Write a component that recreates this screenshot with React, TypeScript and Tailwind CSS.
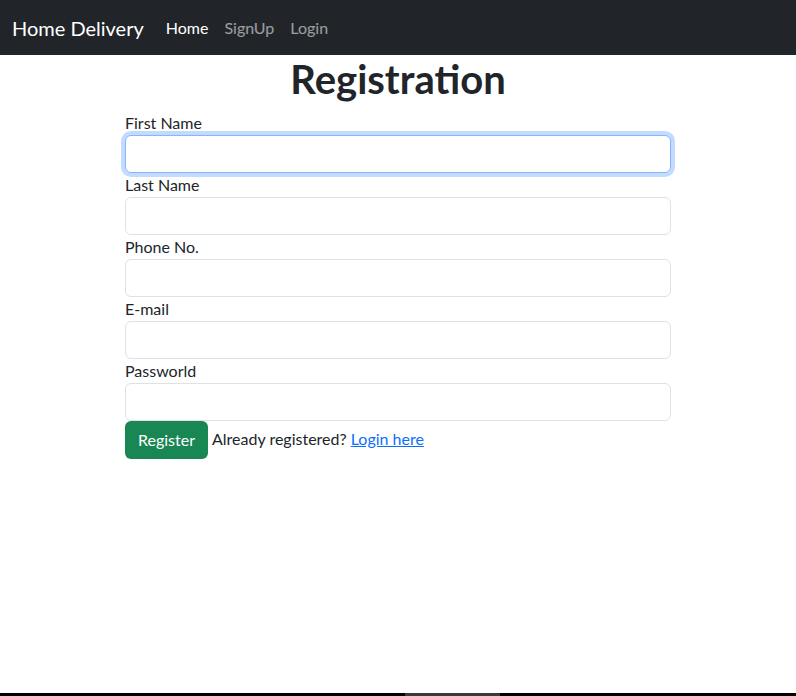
import { useEffect, useRef } from 'react';

const fields = ['First Name', 'Last Name', 'Phone No.', 'E-mail', 'Passworld'];

export default function App() {
  const firstRef = useRef<HTMLInputElement>(null);

  useEffect(() => {
    firstRef.current?.focus();
  }, []);

  return (
    <div className="min-h-screen flex flex-col bg-white text-[#212529] font-['Lato','Noto_Sans',sans-serif]">
      <nav className="h-[55px] bg-[#212529] flex items-center px-3">
        <span className="text-white text-[20px] mr-[22px]">Home Delivery</span>
        <div className="flex text-[16px]">
          <a className="text-white pr-2">Home</a>
          <a className="text-white/55 px-2">SignUp</a>
          <a className="text-white/55 px-2">Login</a>
        </div>
      </nav>

      <main className="flex-1">
        <h1 className="text-center text-[40px] font-bold leading-[1.2] mb-2">Registration</h1>
        <form className="w-[546px] mx-auto" onSubmit={e => e.preventDefault()}>
          {fields.map((label, idx) => (
            <div key={label}>
              <label className="block text-[16px] leading-6">{label}</label>
              <input
                ref={idx === 0 ? firstRef : undefined}
                type={label === 'Passworld' ? 'password' : 'text'}
                className="block w-full h-[38px] px-3 text-[16px] bg-white border border-[#dee2e6] rounded-md outline-none focus:border-[#86b7fe] focus:ring-4 focus:ring-[#0d6efd]/25"
              />
            </div>
          ))}
          <div className="flex items-center">
            <button className="h-[38px] px-[13px] bg-[#198754] text-white text-[16px] rounded-md mr-1">Register</button>
            <span className="text-[16px] -mt-[3px]">
              Already registered? <a href="#" className="text-[#0d6efd] underline">Login here</a>
            </span>
          </div>
        </form>
      </main>

      <div className="h-[3px] bg-black flex">
        <div className="ml-[405px] w-[95px] bg-[#3a3a3a]" />
      </div>
    </div>
  );
}
